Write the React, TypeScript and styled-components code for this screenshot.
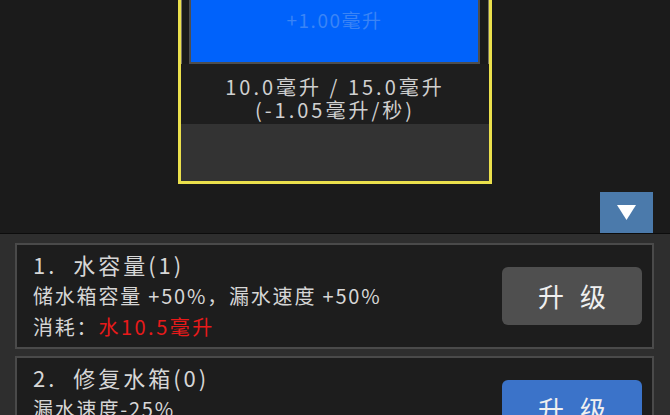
import React from "react";
import styled, { createGlobalStyle } from "styled-components";

const GlobalStyle = createGlobalStyle`
  html, body {
    margin: 0;
    padding: 0;
    background: #2e2e2e;
    overflow: hidden;
  }
  body {
    font-family: "Noto Sans CJK SC", "Noto Sans", sans-serif;
  }
`;

type Upgrade = {
  index: number;
  name: string;
  level: number;
  effect: string;
  cost?: string;
  affordable: boolean;
};

const upgrades: Upgrade[] = [
  {
    index: 1,
    name: "水容量",
    level: 1,
    effect: "储水箱容量 +50%，漏水速度 +50%",
    cost: "水10.5毫升",
    affordable: false,
  },
  {
    index: 2,
    name: "修复水箱",
    level: 0,
    effect: "漏水速度-25%",
    cost: "水5.0毫升",
    affordable: true,
  },
];

const App: React.FC = () => {
  return (
    <Screen>
      <GlobalStyle />
      <TankArea>
        <TankFrame>
          <WaterBar>+1.00毫升</WaterBar>
          <TankStats>
            <div>10.0毫升 / 15.0毫升</div>
            <div>(-1.05毫升/秒)</div>
          </TankStats>
          <TankFooter />
        </TankFrame>
        <ToggleRow>
          <ToggleButton>
            <svg width="19" height="15" viewBox="0 0 19 15">
              <polygon points="0,0 19,0 9.5,15" fill="#ffffff" />
            </svg>
          </ToggleButton>
        </ToggleRow>
      </TankArea>
      <UpgradePanel>
        {upgrades.map((u) => (
          <UpgradeCard key={u.index}>
            <UpgradeText>
              <UpgradeTitle>
                {`${u.index}.  ${u.name}(${u.level})`}
              </UpgradeTitle>
              <UpgradeLine>{u.effect}</UpgradeLine>
              {u.cost && (
                <UpgradeLine>
                  消耗：<Cost>{u.cost}</Cost>
                </UpgradeLine>
              )}
            </UpgradeText>
            <UpgradeButton $active={u.affordable}>升 级</UpgradeButton>
          </UpgradeCard>
        ))}
      </UpgradePanel>
    </Screen>
  );
};

const Screen = styled.div`
  width: 670px;
  height: 415px;
  overflow: hidden;
  display: flex;
  flex-direction: column;
  background: #2e2e2e;
`;

const TankArea = styled.div`
  height: 233px;
  flex-shrink: 0;
  background: #1b1b1b;
  display: flex;
  flex-direction: column;
  align-items: center;
`;

const TankFrame = styled.div`
  width: 308px;
  border: 3px solid #ebe04c;
  border-top: none;
  box-shadow: inset 1px 0 0 #7a7660, inset -1px 0 0 #7a7660,
    inset 0 -1px 0 #7a7660;
  display: flex;
  flex-direction: column;
`;

const WaterBar = styled.div`
  height: 62px;
  margin: 0 9px 0 8px;
  background: #0062fb;
  border: 2px solid #4e4e4e;
  border-top: none;
  color: #3a84f6;
  font-size: 19px;
  line-height: 40px;
  text-align: center;
  letter-spacing: 1.5px;
`;

const TankStats = styled.div`
  height: 60px;
  box-sizing: border-box;
  padding-top: 11px;
  background: #1e1e1e;
  color: #d0d0d0;
  font-size: 20px;
  line-height: 23px;
  text-align: center;
  letter-spacing: 3px;
  white-space: pre;
`;

const TankFooter = styled.div`
  height: 57px;
  background: #333333;
`;

const ToggleRow = styled.div`
  align-self: stretch;
  display: flex;
  justify-content: flex-end;
  margin-top: auto;
  padding-right: 17px;
`;

const ToggleButton = styled.div`
  width: 53px;
  height: 41px;
  background: #4b7aab;
  display: flex;
  align-items: center;
  justify-content: center;
`;

const UpgradePanel = styled.div`
  flex: 1;
  border-top: 1px solid #0c0c0c;
  padding: 9px 16px 0 15px;
  display: flex;
  flex-direction: column;
  gap: 7px;
`;

const UpgradeCard = styled.div`
  flex-shrink: 0;
  display: flex;
  align-items: center;
  background: #1d1d1d;
  border: 2px solid #4a4a4a;
`;

const UpgradeText = styled.div`
  flex: 1;
  padding: 4px 0 5px 16px;
  color: #d6d6d6;
`;

const UpgradeTitle = styled.div`
  font-size: 22px;
  line-height: 31px;
  letter-spacing: 3px;
  white-space: pre;
`;

const UpgradeLine = styled.div`
  font-size: 20px;
  line-height: 31px;
  letter-spacing: 1.8px;
  white-space: nowrap;
`;

const Cost = styled.span`
  color: #e81a1a;
  letter-spacing: 2.5px;
`;

const UpgradeButton = styled.div<{ $active: boolean }>`
  width: 140px;
  height: 58px;
  margin-right: 10px;
  box-sizing: border-box;
  padding-left: 5px;
  border-radius: 6px;
  background: ${(p) => (p.$active ? "#3b73c9" : "#4f4f4f")};
  color: #f0f0f0;
  font-size: 26px;
  line-height: 58px;
  text-align: center;
  letter-spacing: 5px;
  white-space: pre;
`;

export default App;
